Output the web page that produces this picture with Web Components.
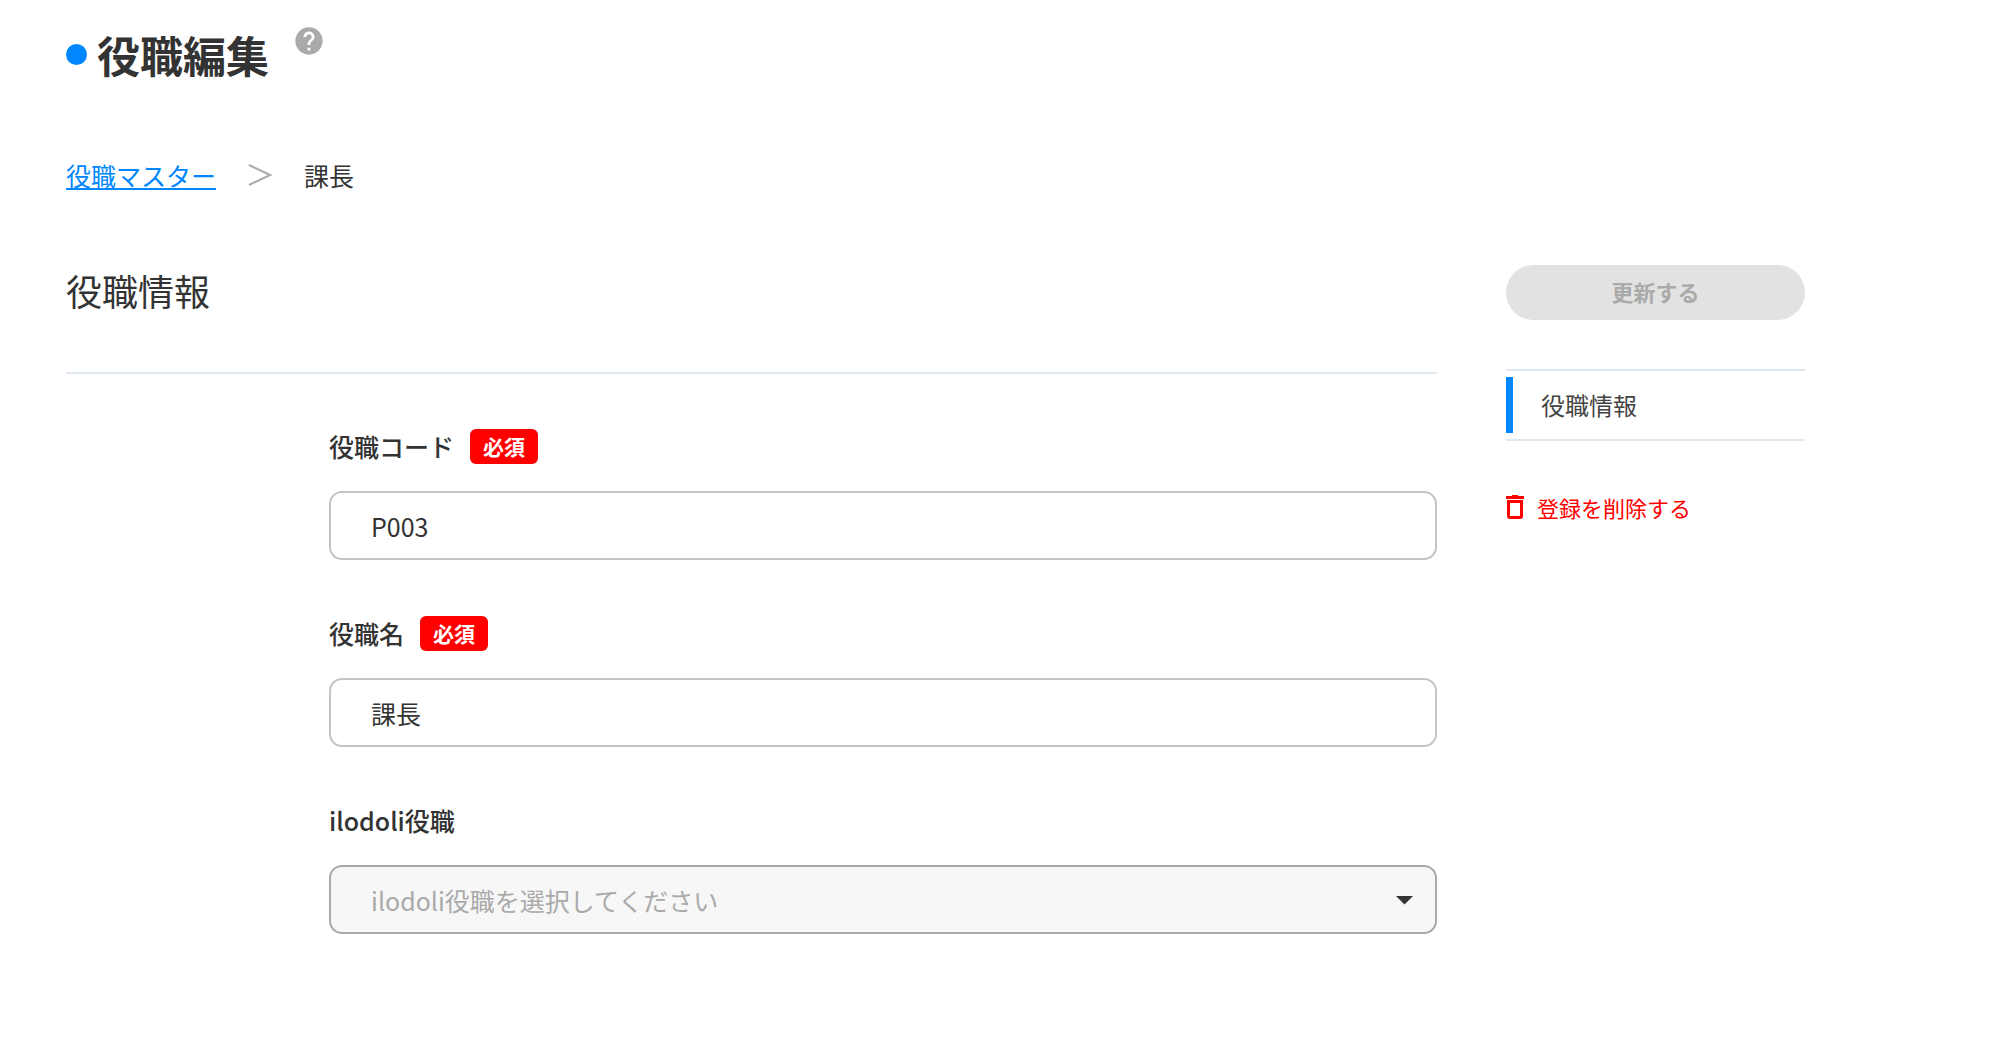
<!DOCTYPE html>
<html lang="ja">
<head>
<meta charset="utf-8">
<meta name="viewport" content="width=device-width, initial-scale=1">
<title>役職編集</title>
<style>
    :root {
        --accent: #0087ff;
        --danger: #ff0000;
        --text: #333333;
        --muted: #aaaaaa;
        --line: #dfe7f0;
    }

    body {
        margin: 0;
        background-color: #ffffff;
        color: var(--text);
        font-family: "Noto Sans CJK JP", "Noto Sans", sans-serif;
        font-size: 24px;
        line-height: 36px;
    }
</style>
</head>
<body>
<position-edit-page></position-edit-page>

<script>
class PageTitle extends HTMLElement {

    constructor() {
        super();
        this.shadowDOM = this.attachShadow({mode: "open"});
    }

    connectedCallback() {
        this.shadowDOM.innerHTML = `
        <style>
        :host {
            display: flex;
            align-items: flex-start;
        }

        h1 {
            display: flex;
            align-items: center;
            gap: 10px;
            margin: 0;
            font-size: 43px;
            line-height: 60px;
            font-weight: 700;
        }

        h1::before {
            content: "";
            width: 21px;
            height: 21px;
            border-radius: 50%;
            background-color: var(--accent);
        }

        button {
            display: flex;
            margin-left: 25px;
            padding: 2px 0 0;
            border: none;
            background: none;
            color: var(--muted);
            cursor: pointer;
        }
        </style>

        <h1><slot></slot></h1>
        <button type="button" aria-label="ヘルプ">
            <svg width="30" height="30" viewBox="1 1 22 22" fill="currentColor">
                <path d="M12 2C6.48 2 2 6.48 2 12s4.48 10 10 10 10-4.48 10-10S17.52 2 12 2zm1 17h-2v-2h2v2zm2.07-7.75l-.9.92C13.45 12.9 13 13.5 13 15h-2v-.5c0-1.1.45-2.1 1.17-2.83l1.24-1.26c.37-.36.59-.86.59-1.41 0-1.1-.9-2-2-2s-2 .9-2 2H8c0-2.21 1.79-4 4-4s4 1.79 4 4c0 .88-.36 1.68-.93 2.25z"/>
            </svg>
        </button>
        `;
    }
}

customElements.define("page-title", PageTitle);

class BreadCrumb extends HTMLElement {

    constructor() {
        super();
        this.shadowDOM = this.attachShadow({mode: "open"});
    }

    connectedCallback() {
        this.shadowDOM.innerHTML = `
        <style>
        :host {
            display: block;
        }

        nav {
            display: flex;
            align-items: center;
            gap: 32px;
            font-size: 25px;
        }

        a {
            color: var(--accent);
            text-decoration: underline;
            text-decoration-thickness: 2px;
            text-underline-offset: 2px;
        }

        svg {
            color: var(--muted);
        }
        </style>

        <nav aria-label="パンくず">
            <a href="#">${this.getAttribute("parent")}</a>
            <svg width="24" height="22" viewBox="0 0 24 22" fill="none" stroke="currentColor" stroke-width="2" aria-hidden="true">
                <path d="M1 1l21 10L1 21"/>
            </svg>
            <span><slot></slot></span>
        </nav>
        `;
    }
}

customElements.define("bread-crumb", BreadCrumb);

class RequiredBadge extends HTMLElement {

    constructor() {
        super();
        this.shadowDOM = this.attachShadow({mode: "open"});
    }

    connectedCallback() {
        this.shadowDOM.innerHTML = `
        <style>
        :host {
            display: block;
            padding: 0 13px;
            border-radius: 6px;
            background-color: var(--danger);
            color: #ffffff;
            font-size: 21px;
            line-height: 35px;
            font-weight: 700;
        }
        </style>

        <slot>必須</slot>
        `;
    }
}

customElements.define("required-badge", RequiredBadge);

// label row and the box styles shared by the text and select fields
const fieldStyle = `
    :host {
        display: block;
    }

    .head {
        display: flex;
        align-items: center;
        gap: 16px;
        margin-bottom: 27px;
    }

    label {
        font-size: 25px;
        font-weight: 500;
    }

    input,
    select {
        display: block;
        box-sizing: border-box;
        width: 100%;
        height: 69px;
        padding: 0 40px;
        border: 2px solid #c4c4c4;
        border-radius: 13px;
        background-color: #ffffff;
        color: var(--text);
        font: inherit;
        font-size: 25px;
        appearance: none;
    }
`;

class TextField extends HTMLElement {

    constructor() {
        super();
        this.shadowDOM = this.attachShadow({mode: "open"});
    }

    connectedCallback() {
        this.shadowDOM.innerHTML = `
        <style>${fieldStyle}</style>

        <div class="head">
            <label for="control">${this.getAttribute("label")}</label>
            ${this.hasAttribute("required") ? "<required-badge></required-badge>" : ""}
        </div>
        <input id="control" type="text" value="${this.getAttribute("value")}">
        `;
    }
}

customElements.define("text-field", TextField);

class SelectField extends HTMLElement {

    constructor() {
        super();
        this.shadowDOM = this.attachShadow({mode: "open"});
    }

    connectedCallback() {
        this.shadowDOM.innerHTML = `
        <style>
        ${fieldStyle}

        .box {
            position: relative;
        }

        select:disabled {
            border-color: var(--muted);
            background-color: #f7f7f7;
            color: var(--muted);
            opacity: 1;
        }

        .box svg {
            position: absolute;
            top: 31px;
            right: 24px;
            pointer-events: none;
        }
        </style>

        <div class="head">
            <label for="control">${this.getAttribute("label")}</label>
        </div>
        <div class="box">
            <select id="control" disabled>
                <option>${this.getAttribute("placeholder")}</option>
            </select>
            <svg width="17" height="9" viewBox="0 0 17 9" fill="#333333" aria-hidden="true">
                <path d="M0 0h17L8.5 8.5z"/>
            </svg>
        </div>
        `;
    }
}

customElements.define("select-field", SelectField);

class FormSection extends HTMLElement {

    constructor() {
        super();
        this.shadowDOM = this.attachShadow({mode: "open"});
    }

    connectedCallback() {
        this.shadowDOM.innerHTML = `
        <style>
        :host {
            display: block;
        }

        h2 {
            margin: 0;
            padding-bottom: 57px;
            border-bottom: 2px solid var(--line);
            font-size: 36px;
            line-height: 50px;
            font-weight: 400;
        }

        .fields {
            display: grid;
            gap: 55px;
            margin: 54px 0 0 263px;
        }
        </style>

        <h2>${this.getAttribute("heading")}</h2>
        <div class="fields"><slot></slot></div>
        `;
    }
}

customElements.define("form-section", FormSection);

class SideMenu extends HTMLElement {

    constructor() {
        super();
        this.shadowDOM = this.attachShadow({mode: "open"});
    }

    connectedCallback() {
        this.shadowDOM.innerHTML = `
        <style>
        :host {
            display: block;
        }

        button {
            font: inherit;
            font-size: 22px;
        }

        .update {
            display: block;
            width: 100%;
            height: 55px;
            padding: 0 0 4px;
            border: none;
            border-radius: 28px;
            background-color: #e2e2e2;
            color: var(--muted);
            font-weight: 700;
        }

        nav {
            margin: 49px 0 48px;
            padding: 6px 0;
            border-top: 2px solid var(--line);
            border-bottom: 2px solid var(--line);
        }

        nav a {
            display: block;
            padding-left: 28px;
            border-left: 7px solid var(--accent);
            color: #444444;
            line-height: 56px;
            text-decoration: none;
        }

        .delete {
            display: flex;
            align-items: center;
            gap: 13px;
            padding: 0;
            border: none;
            background: none;
            color: var(--danger);
            cursor: pointer;
        }
        </style>

        <button class="update" type="button" disabled>更新する</button>
        <nav aria-label="セクション"><a href="#">役職情報</a></nav>
        <button class="delete" type="button">
            <svg width="18" height="24" viewBox="0 0 18 24" fill="none" stroke="currentColor" aria-hidden="true">
                <path d="M0 2.5h18" stroke-width="3"/>
                <path d="M6 1h6" stroke-width="2"/>
                <path d="M2.5 6.5h13V21q0 1.500-1.500 1.500H4q-1.500 0-1.500-1.500z" stroke-width="3"/>
            </svg>
            登録を削除する
        </button>
        `;
    }
}

customElements.define("side-menu", SideMenu);

class PositionEditPage extends HTMLElement {

    constructor() {
        super();
        this.shadowDOM = this.attachShadow({mode: "open"});
    }

    connectedCallback() {
        this.shadowDOM.innerHTML = `
        <style>
        :host {
            display: block;
            padding: 24px 195px 60px 66px;
        }

        bread-crumb {
            margin: 73px 0 72px;
        }

        .columns {
            display: grid;
            grid-template-columns: minmax(0, 1fr) 299px;
            gap: 69px;
            align-items: start;
        }

        @media screen and (max-width: 1100px) {
            :host {
                padding: 24px;
            }

            .columns {
                grid-template-columns: minmax(0, 1fr);
            }
        }
        </style>

        <page-title>役職編集</page-title>
        <bread-crumb parent="役職マスター">課長</bread-crumb>
        <div class="columns">
            <form-section heading="役職情報">
                <text-field label="役職コード" value="P003" required></text-field>
                <text-field label="役職名" value="課長" required></text-field>
                <select-field label="ilodoli役職" placeholder="ilodoli役職を選択してください"></select-field>
            </form-section>
            <side-menu></side-menu>
        </div>
        `;
    }
}

customElements.define("position-edit-page", PositionEditPage);
</script>
</body>
</html>
